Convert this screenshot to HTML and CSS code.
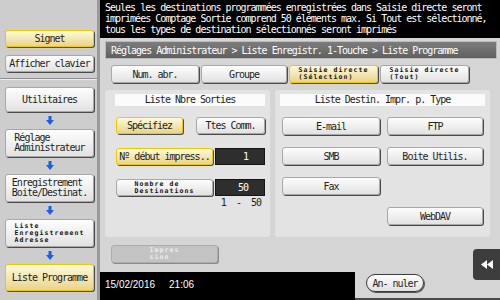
FILE: index.html
```html
<!DOCTYPE html>
<html lang="fr">
<head>
    <meta charset="UTF-8">
    <title>Liste Programme</title>
    <link rel="stylesheet" href="styles.css">
</head>
<body>
  <div class="screen">
    <div class="side">
      <div class="side-top">
        <div class="btn key sel">Signet</div>
        <div class="btn key">Afficher clavier</div>
      </div>
      <div class="flow">
        <div class="btn step first">Utilitaires</div>
        <div class="arrow"><svg width="8" height="9" viewBox="0 0 8 9"><path d="M2.5 0h3v4H8L4 9 0 4h2.5z" fill="#1c5fe6"/></svg></div>
        <div class="btn step"><span class="lines">Réglage<br>Administrateur</span></div>
        <div class="arrow"><svg width="8" height="9" viewBox="0 0 8 9"><path d="M2.5 0h3v4H8L4 9 0 4h2.5z" fill="#1c5fe6"/></svg></div>
        <div class="btn step"><span class="lines">Enregistrement<br>Boite/Destinat.</span></div>
        <div class="arrow"><svg width="8" height="9" viewBox="0 0 8 9"><path d="M2.5 0h3v4H8L4 9 0 4h2.5z" fill="#1c5fe6"/></svg></div>
        <div class="btn step"><span class="lines small">Liste<br>Enregistrement<br>Adresse</span></div>
        <div class="arrow"><svg width="8" height="9" viewBox="0 0 8 9"><path d="M2.5 0h3v4H8L4 9 0 4h2.5z" fill="#1c5fe6"/></svg></div>
        <div class="btn step last sel">Liste Programme</div>
      </div>
    </div>

    <div class="main">
      <div class="msg">
        <span>Seules les destinations programmées enregistrées dans Saisie directe seront</span>
        <span>imprimées Comptage Sortie comprend 50 éléments max. Si Tout est sélectionné,</span>
        <span>tous les types de destination sélectionnés seront imprimés</span>
      </div>

      <div class="panel">
        <div class="crumb">Réglages Administrateur &gt; Liste Enregistr. 1-Touche &gt; Liste Programme</div>

        <div class="tabs">
          <div class="btn tab t1">Num. abr.</div>
          <div class="btn tab t2">Groupe</div>
          <div class="btn tab t3 sel"><span class="lines small">Saisie directe<br>(Sélection)</span></div>
          <div class="btn tab t4"><span class="lines small">Saisie directe<br>(Tout)</span></div>
        </div>

        <div class="cols">
          <div class="box box-left">
            <div class="box-head">Liste Nbre Sorties</div>
            <div class="row row-mode">
              <div class="btn opt sel">Spécifiez</div>
              <div class="btn opt wide">Ttes Comm.</div>
            </div>
            <div class="row">
              <div class="btn field sel">Nº début impress..</div>
              <div class="value">1</div>
            </div>
            <div class="row">
              <div class="btn field"><span class="lines small">Nombre de<br>Destinations</span></div>
              <div class="value">50</div>
            </div>
            <div class="range">1  -  50</div>
          </div>

          <div class="box box-right">
            <div class="box-head">Liste Destin. Impr. p. Type</div>
            <div class="types">
              <div class="btn">E-mail</div>
              <div class="btn">FTP</div>
              <div class="btn">SMB</div>
              <div class="btn">Boite Utilis.</div>
              <div class="btn">Fax</div>
              <div></div>
              <div></div>
              <div class="btn">WebDAV</div>
            </div>
          </div>
        </div>

        <div class="btn off"><span class="lines small">Impres<br>sion</span></div>
      </div>

      <div class="status">
        <div class="clock"><span>15/02/2016</span><span class="time">21:06</span></div>
        <div class="foot"><div class="btn cancel">An- nuler</div></div>
      </div>

      <div class="pull">
        <svg width="12" height="9" viewBox="0 0 12 9"><path d="M6 0L0 4.5 6 9zM12 0L6 4.5 12 9z" fill="#fff"/></svg>
      </div>
    </div>
  </div>
</body>
</html>
```

FILE: styles.css
```css
* {
box-sizing: border-box;
}

body {
margin: 0;
width: 500px;
height: 300px;
overflow: hidden;
background-color: #000;
font-family: "DejaVu Sans Mono", "Liberation Mono", monospace;
font-size: 10px;
letter-spacing: -1px;
color: #1e1e1e;
}

.screen {
display: grid;
grid-template-columns: 100px 400px;
height: 300px;
}

/* left column */
.side {
background-color: #cdcdcd;
border-right: 3px solid #9a9a9a;
padding-top: 30px;
}

.side-top {
display: flex;
flex-direction: column;
gap: 8px;
padding: 0 3px 6px 5px;
border-bottom: 1px solid #8e8e8e;
box-shadow: 0 1px 0 #ececec;
}

.key {
height: 17px;
}

.flow {
display: flex;
flex-direction: column;
align-items: center;
padding: 8px 3px 0 5px;
}

.step {
width: 89px;
height: 28px;
}

.step.first {
height: 25px;
}

.step.last {
height: 27px;
}

.arrow {
height: 17px;
display: flex;
align-items: center;
justify-content: center;
}

/* buttons */
.btn {
display: flex;
align-items: center;
justify-content: center;
white-space: nowrap;
background: linear-gradient(#fdfdfd, #e2e2e2);
border: 1px solid #a8a8a8;
border-radius: 3px;
box-shadow: 1px 1px 0 #4a4a4a;
}

.btn.sel {
background: linear-gradient(#fffadc, #e8d48a);
border-color: #efc800;
}

.lines {
display: block;
text-align: left;
line-height: 10px;
}

.lines.small {
font-size: 6.5px;
font-weight: bold;
letter-spacing: 1.1px;
line-height: 7px;
color: #111;
}

/* main area */
.main {
position: relative;
display: grid;
grid-template-rows: 38px 234px 28px;
}

.msg {
background-color: #000;
color: #fff;
padding: 2px 5px 0;
line-height: 11px;
}

.msg span {
display: block;
white-space: nowrap;
}

.panel {
background-color: #d5d5d5;
padding: 3px 3px 0 5px;
}

.crumb {
height: 18px;
line-height: 17px;
padding-left: 5px;
color: #fff;
white-space: nowrap;
background: linear-gradient(#7c7c7c, #606060);
border: 1px solid #b9b9b9;
}

.tabs {
display: flex;
gap: 2px;
height: 18px;
margin: 6px 0 0 6px;
}

.t1 { width: 88px; }
.t2 { width: 86px; }
.t3 { width: 89px; }
.t4 { width: 89px; }

.cols {
display: flex;
gap: 5px;
height: 147px;
margin-top: 7px;
}

.box {
background-color: #e3e3e3;
border-radius: 3px;
padding-top: 4px;
}

.box-left {
width: 165px;
padding-left: 10px;
padding-right: 5px;
}

.box-right {
width: 215px;
padding-left: 5px;
padding-right: 5px;
}

.box-head {
height: 12px;
line-height: 12px;
text-align: center;
background-color: #fbfbfb;
}

.row {
display: flex;
gap: 2px;
height: 17px;
margin-top: 14px;
padding-left: 1px;
}

.row-mode {
margin-top: 11px;
justify-content: space-between;
}

.opt {
width: 67px;
}

.opt.wide {
width: 69px;
}

.field {
width: 97px;
}

.value {
width: 50px;
background-color: #2e2e2e;
border: 1px solid #151515;
color: #fff;
text-align: right;
padding-right: 16px;
line-height: 15px;
}

.range {
white-space: pre;
text-align: right;
padding-right: 4px;
margin-top: 2px;
line-height: 10px;
}

.types {
display: grid;
grid-template-columns: 98px 96px;
grid-auto-rows: 18px;
gap: 12px 7px;
margin: 11px 0 0 2px;
}

.off {
width: 107px;
height: 18px;
margin: 8px 0 0 6px;
background: #c3c3c3;
border-color: #adadad;
box-shadow: 1px 1px 0 #8a8a8a;
}

.off .lines.small {
color: #ececec;
}

/* bottom bar */
.status {
display: flex;
}

.clock {
width: 255px;
background-color: #000;
color: #fff;
font-family: "Liberation Sans", Arial, sans-serif;
font-size: 10px;
letter-spacing: 0;
line-height: 12px;
padding: 7px 0 0 5px;
}

.time {
margin-left: 14px;
}

.foot {
flex: 1;
background-color: #d5d5d5;
padding: 2px 0 0 11px;
border-bottom: 2px solid #4a4a4a;
}

.cancel {
width: 58px;
height: 18px;
border-radius: 9px;
border-color: #3a3a3a;
box-shadow: 1px 1px 0 #555;
}

.pull {
position: absolute;
right: 0;
top: 249px;
width: 27px;
height: 31px;
background-color: #3d3d3d;
border-radius: 4px 0 0 4px;
display: flex;
align-items: center;
justify-content: center;
}
```
